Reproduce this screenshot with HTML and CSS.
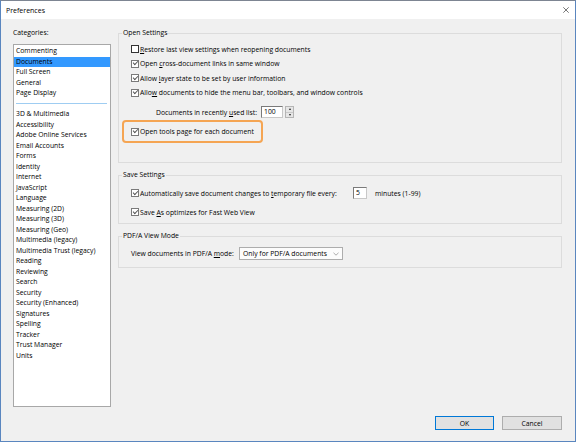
FILE: index.html
```html
<!DOCTYPE html>
<html>
<head>
<meta charset="utf-8">
<title>Preferences</title>
<link rel="stylesheet" href="styles.css">
</head>
<body>
<div class="window">
  <div class="titlebar">
    <span class="title">Preferences</span>
    <svg class="close" viewBox="0 0 6 6"><path d="M0.3 0.3 L5.7 5.7 M5.7 0.3 L0.3 5.7" stroke="#555" stroke-width="0.8" fill="none"/></svg>
  </div>
  <div class="main">
    <div class="cats">
      <div class="label">Categories:</div>
      <div class="list">
        <div class="item">Commenting</div>
        <div class="item sel">Documents</div>
        <div class="item">Full Screen</div>
        <div class="item">General</div>
        <div class="item">Page Display</div>
        <div class="sep"></div>
        <div class="item">3D &amp; Multimedia</div>
        <div class="item">Accessibility</div>
        <div class="item">Adobe Online Services</div>
        <div class="item">Email Accounts</div>
        <div class="item">Forms</div>
        <div class="item">Identity</div>
        <div class="item">Internet</div>
        <div class="item">JavaScript</div>
        <div class="item">Language</div>
        <div class="item">Measuring (2D)</div>
        <div class="item">Measuring (3D)</div>
        <div class="item">Measuring (Geo)</div>
        <div class="item">Multimedia (legacy)</div>
        <div class="item">Multimedia Trust (legacy)</div>
        <div class="item">Reading</div>
        <div class="item">Reviewing</div>
        <div class="item">Search</div>
        <div class="item">Security</div>
        <div class="item">Security (Enhanced)</div>
        <div class="item">Signatures</div>
        <div class="item">Spelling</div>
        <div class="item">Tracker</div>
        <div class="item">Trust Manager</div>
        <div class="item">Units</div>
      </div>
    </div>
    <div class="settings">
      <fieldset class="group">
        <legend>Open Settings</legend>
        <div class="gbody open-body">
          <div class="row"><span class="cb"></span><span><u>R</u>estore last view settings when reopening documents</span></div>
          <div class="row"><span class="cb on"></span><span>Open <u>c</u>ross-document links in same window</span></div>
          <div class="row"><span class="cb on"></span><span>Allow <u>l</u>ayer state to be set by user information</span></div>
          <div class="row"><span class="cb on"></span><span>Allo<u>w</u> documents to hide the menu bar, toolbars, and window controls</span></div>
          <div class="row recent">
            <span class="recentlabel">Documents in recently <u>u</u>sed list:</span>
            <span class="field num">100</span>
            <span class="spin"><span class="up"></span><span class="down"></span></span>
          </div>
          <div class="hl">
            <span class="cb on"></span><span>Open tools pa<u>g</u>e for each document</span>
          </div>
        </div>
      </fieldset>
      <fieldset class="group gap">
        <legend>Save Settings</legend>
        <div class="gbody save-body">
          <div class="row">
            <span class="cb on"></span><span class="autolabel">Automatically save document changes to <u>t</u>emporary file every:</span>
            <span class="field mins">5</span>
            <span class="after">minutes (1-99)</span>
          </div>
          <div class="row second"><span class="cb on"></span><span>Save <u>A</u>s optimizes for Fast Web View</span></div>
        </div>
      </fieldset>
      <fieldset class="group gap">
        <legend>PDF/A View Mode</legend>
        <div class="gbody pdfa-body">
          <div class="row pdfa">
            <span class="pdfalabel">View documents in PDF/A <u>m</u>ode:</span>
            <span class="select">
              <span>Only for PDF/A documents</span>
              <svg class="chev" viewBox="0 0 6 4"><path d="M0.5 0.8 L3 3.2 L5.5 0.8" stroke="#888" stroke-width="0.7" fill="none"/></svg>
            </span>
          </div>
        </div>
      </fieldset>
    </div>
  </div>
  <div class="footer">
    <button class="btn ok">OK</button>
    <button class="btn">Cancel</button>
  </div>
</div>
</body>
</html>
```

FILE: styles.css
```css
html, body {
  margin: 0;
  padding: 0;
}
body {
  width: 576px;
  height: 442px;
  overflow: hidden;
  font-family: "Open Sans", "Noto Sans", "DejaVu Sans", sans-serif;
  font-size: 6.8px;
  color: #000;
}
.window {
  box-sizing: border-box;
  width: 576px;
  height: 442px;
  border: 1px solid #5a86bf;
  border-top-color: #7d8592;
  background: #f0f0f0;
  display: flex;
  flex-direction: column;
}
.titlebar {
  flex: none;
  height: 18px;
  background: #fff;
  display: flex;
  align-items: center;
  justify-content: space-between;
  padding: 0 6px 0 5px;
}
.title {
  font-size: 7px;
}
.close {
  width: 6px;
  height: 6px;
}
.main {
  flex: 1;
  display: flex;
  gap: 7px;
  padding: 10px 13px 0 12px;
}
.cats {
  flex: none;
  width: 98px;
  display: flex;
  flex-direction: column;
}
.label {
  height: 8px;
  line-height: 8px;
}
.list {
  margin-top: 7px;
  box-sizing: border-box;
  height: 363px;
  border: 1px solid #a8a8a8;
  background: #fff;
  padding-top: 1px;
}
.item {
  height: 10.53px;
  line-height: 10.53px;
  padding-left: 2px;
  white-space: nowrap;
}
.item.sel {
  background: #3399ff;
}
.sep {
  height: 10.53px;
  display: flex;
  align-items: center;
  padding: 0 3px 0 2px;
}
.sep::before {
  content: "";
  flex: 1;
  height: 1px;
  background: #9fcdf2;
}
.settings {
  flex: 1;
  display: flex;
  flex-direction: column;
}
.group {
  margin: 0;
  padding: 0;
  min-width: 0;
  border: 1px solid #dcdcdc;
}
.group.gap {
  margin-top: 8px;
}
.group legend {
  margin-left: 3px;
  padding: 0 1px;
  line-height: 8px;
  height: 8px;
}
.gbody {
  padding: 0 12px;
}
.open-body {
  padding-top: 4.75px;
  padding-bottom: 19px;
}
.save-body {
  padding-top: 7px;
  padding-bottom: 4px;
}
.pdfa-body {
  padding-top: 7px;
  padding-bottom: 7px;
}
.row {
  height: 14.5px;
  display: flex;
  align-items: center;
  white-space: nowrap;
}
.save-body .row {
  height: 14px;
}
.save-body .row.second {
  margin-top: 5px;
}
.cb {
  flex: none;
  box-sizing: border-box;
  width: 8px;
  height: 8px;
  border: 1px solid #333;
  background: #fff;
  margin-right: 1px;
  position: relative;
}
.cb.on {
  border-color: #7a7a7a;
}
.cb.on::after {
  content: "";
  position: absolute;
  left: 1.3px;
  top: 0.6px;
  width: 3.6px;
  height: 1.8px;
  border-left: 1px solid #555;
  border-bottom: 1px solid #555;
  transform: rotate(-45deg);
}
.row.recent {
  height: 14px;
  margin-top: 5.25px;
  padding-left: 25px;
}
.recentlabel {
  width: 98px;
  flex: none;
}
.field {
  box-sizing: border-box;
  height: 12px;
  line-height: 10px;
  border: 1px solid #7a7a7a;
  border-right-color: #c8c8c8;
  border-bottom-color: #c8c8c8;
  background: #fff;
  padding-left: 2px;
}
.field.num {
  width: 22px;
  margin-left: 7px;
}
.spin {
  box-sizing: border-box;
  width: 9px;
  height: 12px;
  margin-left: 2px;
  display: flex;
  flex-direction: column;
  border: 1px solid #b5b5b5;
  background: #e6e6e6;
}
.spin .up, .spin .down {
  flex: 1;
  display: flex;
  align-items: center;
  justify-content: center;
}
.spin .up {
  border-bottom: 1px solid #c9c9c9;
}
.spin .up::before {
  content: "";
  border-left: 1.5px solid transparent;
  border-right: 1.5px solid transparent;
  border-bottom: 2px solid #222;
}
.spin .down::before {
  content: "";
  border-left: 1.5px solid transparent;
  border-right: 1.5px solid transparent;
  border-top: 2px solid #222;
}
.hl {
  box-sizing: border-box;
  width: 141px;
  height: 23px;
  margin: 1px 0 0 -9px;
  padding-left: 7px;
  border: 2px solid #f5a553;
  border-radius: 4px;
  display: flex;
  align-items: center;
  white-space: nowrap;
}
.autolabel {
  width: 213px;
  flex: none;
}
.field.mins {
  width: 14px;
}
.after {
  margin-left: 8px;
}
.row.pdfa {
  height: 13px;
}
.pdfalabel {
  width: 108px;
  flex: none;
}
.select {
  box-sizing: border-box;
  width: 104px;
  height: 13px;
  border: 1px solid #adadad;
  background: #fcfcfc;
  display: flex;
  align-items: center;
  justify-content: space-between;
  padding: 0 3px 0 3px;
}
.chev {
  width: 6px;
  height: 4px;
}
.footer {
  flex: none;
  display: flex;
  justify-content: flex-end;
  gap: 8px;
  padding: 0 13px 11px 0;
}
.btn {
  box-sizing: border-box;
  width: 60px;
  height: 14px;
  padding: 0;
  font-family: inherit;
  font-size: 6.8px;
  color: #000;
  background: #e1e1e1;
  border: 1px solid #adadad;
}
.btn.ok {
  width: 59px;
  border-color: #0078d7;
}
```
